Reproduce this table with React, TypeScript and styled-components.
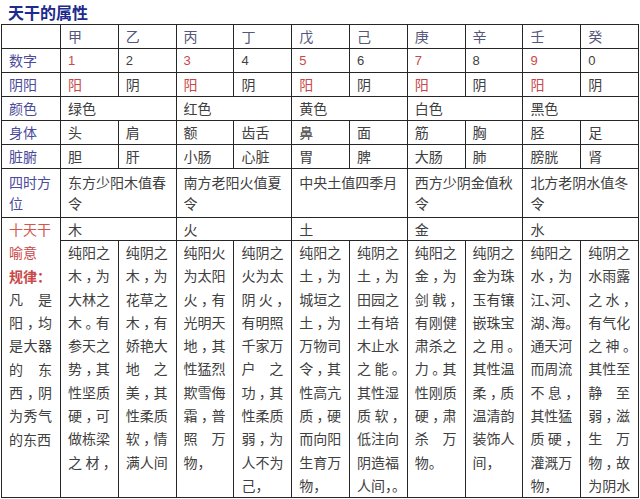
import styled, { createGlobalStyle } from 'styled-components';

const GlobalStyle = createGlobalStyle`
  html, body {
    margin: 0;
    padding: 0;
    background: #ffffff;
  }
  body {
    font-family: "Noto Sans CJK SC", "Noto Sans", sans-serif;
    color: #333;
  }
`;

type Tone = 'plain' | 'label' | 'head' | 'red' | 'warm';

const toneColor: Record<Tone, string> = {
  plain: '#404040',
  label: '#4b4b9a',
  head: '#55577a',
  red: '#c94848',
  warm: '#d0584a',
};

const stems = ['甲', '乙', '丙', '丁', '戊', '己', '庚', '辛', '壬', '癸'];
const numbers = ['1', '2', '3', '4', '5', '6', '7', '8', '9', '0'];
const body = ['头', '肩', '额', '齿舌', '鼻', '面', '筋', '胸', '胫', '足'];
const organs = ['胆', '肝', '小肠', '心脏', '胃', '脾', '大肠', '肺', '膀胱', '肾'];
const colours = ['绿色', '红色', '黄色', '白色', '黑色'];
const seasons = ['东方少阳木值春令', '南方老阳火值夏令', '中央土值四季月', '西方少阴金值秋令', '北方老阴水值冬令'];
const elements = ['木', '火', '土', '金', '水'];

// one entry per stem, one string per printed line
const meanings: string[][] = [
  ['纯阳之', '木，为', '大林之', '木。有', '参天之', '势，其', '性坚质', '硬，可', '做栋梁', '之材，'],
  ['纯阴之', '木，为', '花草之', '木，有', '娇艳大', '地之', '美，其', '性柔质', '软，情', '满人间'],
  ['纯阳火', '为太阳', '火，有', '光明天', '地，其', '性猛烈', '欺雪侮', '霜，普', '照万', '物，'],
  ['纯阴之', '火为太', '阴火，', '有明照', '千家万', '户之', '功，其', '性柔质', '弱，为', '人不为', '己，'],
  ['纯阳之', '土，为', '城垣之', '土，为', '万物司', '令，其', '性高亢', '质，硬', '而向阳', '生育万', '物，'],
  ['纯阴之', '土，为', '田园之', '土有培', '木止水', '之能。', '其性湿', '质软，', '低注向', '阴造福', '人间，。'],
  ['纯阳之', '金，为', '剑戟，', '有刚健', '肃杀之', '力。其', '性刚质', '硬，肃', '杀万', '物。'],
  ['纯阴之', '金为珠', '玉有镶', '嵌珠宝', '之用。', '其性温', '柔，质', '温清韵', '装饰人', '间，'],
  ['纯阳之', '水，为', '江、河、', '湖、海。', '通天河', '而周流', '不息，', '其性猛', '质硬，', '灌溉万', '物，'],
  ['纯阴之', '水雨露', '之水，', '有气化', '之神。', '其性至', '静至', '弱，滋', '生万', '物，故', '为阴水'],
];

const firstColumn = ['凡是', '阳，均', '是大器', '的东', '西，阴', '为秀气', '的东西'];

const Page = styled.div`
  width: 640px;
  height: 499px;
  overflow: hidden;
  padding-left: 1px;
  box-sizing: border-box;
`;

const Title = styled.h1`
  margin: 0;
  height: 24px;
  padding-left: 7px;
  font-size: 16px;
  line-height: 25px;
  font-weight: 700;
  color: #1d2a8e;
`;

const Table = styled.table`
  width: 637px;
  border-collapse: collapse;
  table-layout: fixed;
  border: 1px solid #222;
`;

const Row = styled.tr<{ $h: number }>`
  height: ${({ $h }) => $h}px;
`;

const Cell = styled.td<{ $tone?: Tone; $latin?: boolean; $top?: boolean }>`
  border: 1px solid #262626;
  padding: ${({ $top }) => ($top ? '3px 6px 0 7px' : '0 6px 0 7px')};
  font-size: ${({ $latin }) => ($latin ? '13px' : '14px')};
  line-height: 21px;
  font-weight: 400;
  color: ${({ $tone }) => toneColor[$tone ?? 'plain']};
  vertical-align: ${({ $top }) => ($top ? 'top' : 'middle')};
  font-family: ${({ $latin }) =>
    $latin ? '"Liberation Sans", Arial, sans-serif' : '"Noto Sans CJK SC", sans-serif'};
  overflow: hidden;
  word-break: break-all;
`;

const TallCell = styled(Cell)`
  padding: 0 8px 0 7px;
  line-height: 23.3px;
  font-feature-settings: 'halt';
`;

const Line = styled.span<{ $spread: boolean; $tone?: Tone; $bold?: boolean }>`
  display: block;
  white-space: nowrap;
  text-align: ${({ $spread }) => ($spread ? 'justify' : 'left')};
  text-align-last: ${({ $spread }) => ($spread ? 'justify' : 'left')};
  text-justify: inter-character;
  color: ${({ $tone }) => ($tone ? toneColor[$tone] : 'inherit')};
  font-weight: ${({ $bold }) => ($bold ? 700 : 'inherit')};
`;

const isYang = (i: number) => i % 2 === 0;

export default function App() {
  return (
    <Page>
      <GlobalStyle />
      <Title>天干的属性</Title>
      <Table>
        <colgroup>
          <col style={{ width: 59 }} />
          {stems.map((s) => (
            <col key={s} style={{ width: 57.8 }} />
          ))}
        </colgroup>
        <tbody>
          <Row $h={24}>
            <Cell />
            {stems.map((s) => (
              <Cell key={s} $tone="head">
                {s}
              </Cell>
            ))}
          </Row>
          <Row $h={24}>
            <Cell $tone="label">数字</Cell>
            {numbers.map((n, i) => (
              <Cell key={n} $latin $tone={isYang(i) ? 'red' : 'plain'}>
                {n}
              </Cell>
            ))}
          </Row>
          <Row $h={24}>
            <Cell $tone="label">阴阳</Cell>
            {stems.map((s, i) => (
              <Cell key={s} $tone={isYang(i) ? 'red' : 'plain'}>
                {isYang(i) ? '阳' : '阴'}
              </Cell>
            ))}
          </Row>
          <Row $h={24}>
            <Cell $tone="label">颜色</Cell>
            {colours.map((c) => (
              <Cell key={c} colSpan={2}>
                {c}
              </Cell>
            ))}
          </Row>
          <Row $h={24}>
            <Cell $tone="label">身体</Cell>
            {body.map((b) => (
              <Cell key={b}>{b}</Cell>
            ))}
          </Row>
          <Row $h={24}>
            <Cell $tone="label">脏腑</Cell>
            {organs.map((o) => (
              <Cell key={o}>{o}</Cell>
            ))}
          </Row>
          <Row $h={49}>
            <Cell $tone="label" $top>
              四时方位
            </Cell>
            {seasons.map((s) => (
              <Cell key={s} colSpan={2} $top>
                {s}
              </Cell>
            ))}
          </Row>
          <Row $h={23}>
            <TallCell rowSpan={2} $top>
              <Line $spread={false} $tone="warm">十天干</Line>
              <Line $spread={false} $tone="red">喻意</Line>
              <Line $spread={false} $tone="red" $bold>规律：</Line>
              {firstColumn.map((l, i) => (
                <Line key={i} $spread={i < firstColumn.length - 1}>
                  {l}
                </Line>
              ))}
            </TallCell>
            {elements.map((e) => (
              <Cell key={e} colSpan={2}>
                {e}
              </Cell>
            ))}
          </Row>
          <Row $h={257}>
            {meanings.map((lines, c) => (
              <TallCell key={c} $top>
                {lines.map((l, i) => (
                  <Line key={i} $spread={i < lines.length - 1 || l.length >= 3}>
                    {l}
                  </Line>
                ))}
              </TallCell>
            ))}
          </Row>
        </tbody>
      </Table>
    </Page>
  );
}
